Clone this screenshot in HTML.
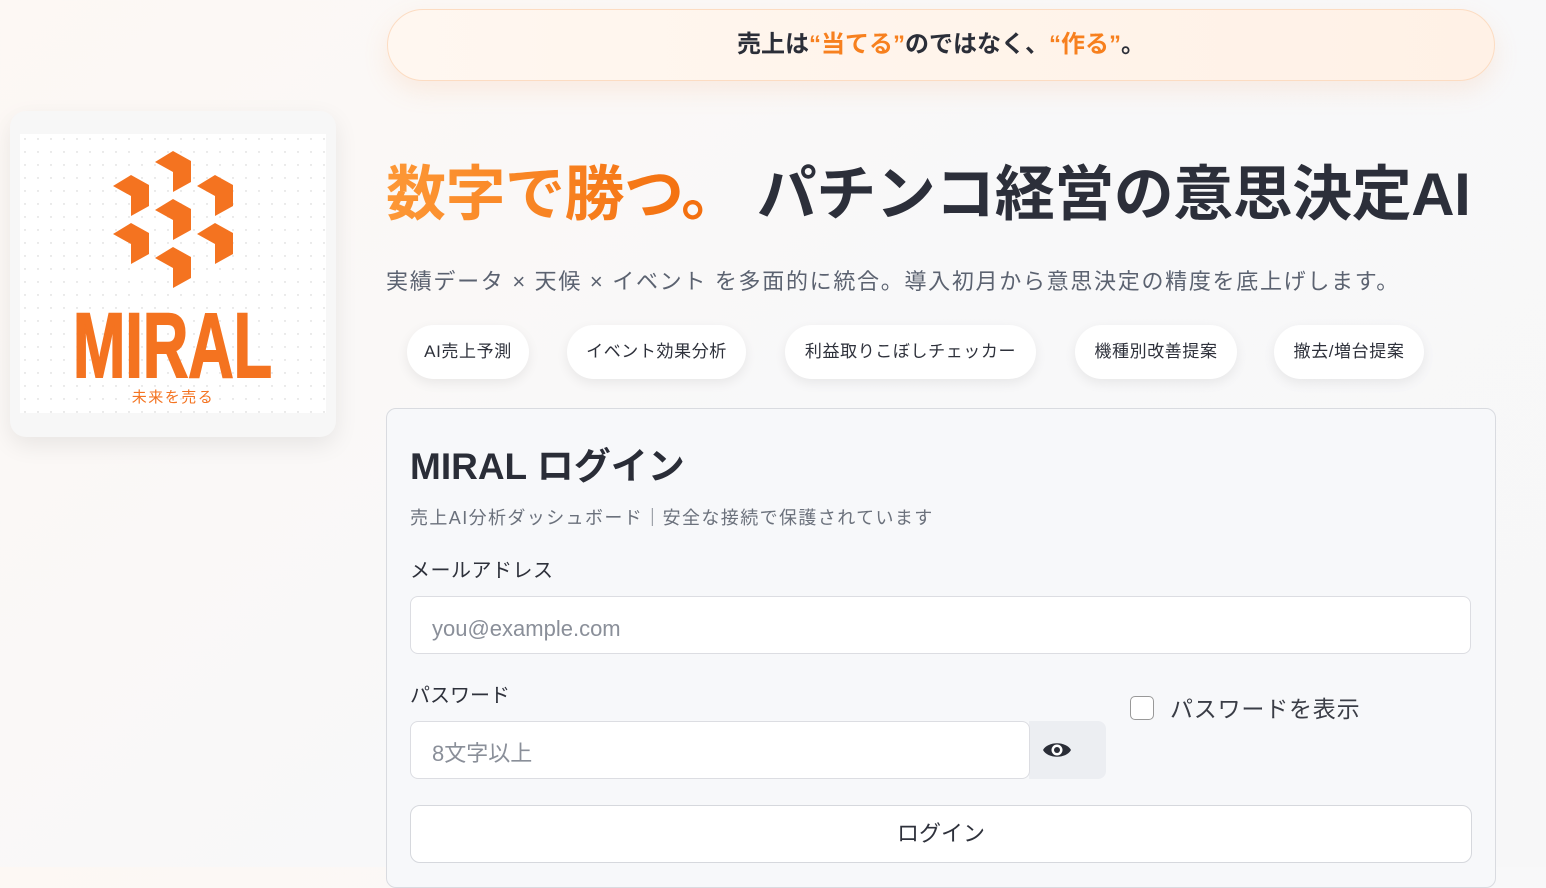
<!DOCTYPE html>
<html><head><meta charset="utf-8"><style>
*{margin:0;padding:0;box-sizing:border-box}
body{width:1546px;height:867px;overflow:hidden;position:relative;font-family:"Liberation Sans","Noto Sans CJK JP",sans-serif;background:linear-gradient(135deg,#fdf8f4 0%,#f8f8f9 50%,#f7f7f8 100%);color:#2e313b}
.a{position:absolute}
.banner{left:387px;top:9px;width:1108px;height:72px;border-radius:36px;background:linear-gradient(90deg,#fff7f0,#fff1e6);border:1.5px solid #fcdcc2;box-shadow:0 10px 25px rgba(250,160,100,.15);font-size:24px;font-weight:700;text-align:center;line-height:69px;color:#2b2e38}
.or{color:#f7801f}
.logo{left:10px;top:111px;width:326px;height:326px;border-radius:16px;background:#f7f7f7;box-shadow:0 8px 24px rgba(0,0,0,.08)}
.h1{left:386px;top:146px;font-size:60px;font-weight:700;white-space:nowrap;color:#2c2f3a;letter-spacing:-0.5px}
.h1 .g{background:linear-gradient(90deg,#fd9836,#f26a0a);-webkit-background-clip:text;color:transparent}
.sub{left:386px;top:264px;font-size:22px;color:#5b6270;white-space:nowrap;letter-spacing:1.7px}
.pill{top:325px;height:54px;border-radius:27px;background:#fff;box-shadow:0 4px 12px rgba(0,0,0,.07);font-size:17px;line-height:54px;text-align:center;color:#2e313b;letter-spacing:.6px}
.card{left:386px;top:408px;width:1110px;height:480px;border:1px solid #d9dbe0;border-radius:10px;background:#f7f8fa}
.in{background:#fff;border:1px solid #dcdde2;border-radius:8px;color:#8a8f99;font-size:22px;padding-left:21px}
</style></head><body>
<div class="a banner">売上は<span class="or">“当てる”</span>のではなく、<span class="or">“作る”</span>。</div>
<div class="a logo">
<svg width="326" height="326" style="position:absolute;left:0;top:0">
<defs><pattern id="d" width="13" height="13" patternUnits="userSpaceOnUse"><circle cx="2" cy="2" r=".7" fill="#ccc"/></pattern>
<path id="c" d="M0 11 L18 0 L36 10 L36 31 L18 41 L18 21 Z" fill="#f47320"/></defs>
<rect x="10" y="23" width="306" height="279" fill="#fff"/>
<rect x="10" y="23" width="306" height="279" fill="url(#d)"/>
<g transform="translate(-10,-111)">
<use href="#c" x="155" y="151"/><use href="#c" x="113" y="175"/><use href="#c" x="197" y="175"/>
<use href="#c" x="155" y="199"/><use href="#c" x="113" y="223"/><use href="#c" x="197" y="223"/>
<use href="#c" x="155" y="247"/>
<text x="73" y="377" font-family="Liberation Sans" font-weight="700" font-size="92" fill="#f47320" textLength="199" lengthAdjust="spacingAndGlyphs" stroke="#f47320" stroke-width="2">MIRAL</text>
<text x="173" y="402" font-size="15" fill="#f47320" text-anchor="middle" letter-spacing="1.5" font-family="Noto Sans CJK JP,sans-serif">未来を売る</text>
</g></svg></div>
<div class="a h1"><span class="g">数字で勝つ。</span> パチンコ経営の意思決定AI</div>
<div class="a sub">実績データ × 天候 × イベント を多面的に統合。導入初月から意思決定の精度を底上げします。</div>
<div class="a pill" style="left:407px;width:122px">AI売上予測</div>
<div class="a pill" style="left:567px;width:179px">イベント効果分析</div>
<div class="a pill" style="left:785px;width:251px">利益取りこぼしチェッカー</div>
<div class="a pill" style="left:1075px;width:162px">機種別改善提案</div>
<div class="a pill" style="left:1274px;width:150px">撤去/増台提案</div>
<div class="a card"></div>
<div class="a" style="left:410px;top:436px;font-size:37px;font-weight:700;color:#2a2d37">MIRAL ログイン</div>
<div class="a" style="left:410px;top:504px;font-size:18px;color:#6b717c;letter-spacing:1.4px">売上AI分析ダッシュボード｜安全な接続で保護されています</div>
<div class="a" style="left:410px;top:554px;font-size:20px;color:#2e313b;letter-spacing:.5px">メールアドレス</div>
<div class="a in" style="left:410px;top:596px;width:1061px;height:58px;line-height:64px">you@example.com</div>
<div class="a" style="left:410px;top:679px;font-size:20px;color:#2e313b">パスワード</div>
<div class="a" style="left:1029px;top:721px;width:77px;height:58px;background:#eceef2;border-radius:0 8px 8px 0"></div>
<div class="a in" style="left:410px;top:721px;width:620px;height:58px;line-height:64px">8文字以上</div>
<svg class="a" style="left:1042px;top:739px" width="30" height="22" viewBox="0 0 30 22"><path d="M1 11 C6 2 24 2 29 11 C24 20 6 20 1 11Z" fill="#2a2d37"/><circle cx="15" cy="11" r="5.5" fill="#fff"/><circle cx="15" cy="11" r="3" fill="#2a2d37"/></svg>
<div class="a" style="left:1130px;top:696px;width:24px;height:24px;border:1.5px solid #999;border-radius:5px;background:#fff"></div>
<div class="a" style="left:1170px;top:690px;font-size:23px;color:#3a3d46;letter-spacing:.8px">パスワードを表示</div>
<div class="a" style="left:410px;top:805px;width:1062px;height:58px;background:#fff;border:1px solid #d6d8dd;border-radius:10px;text-align:center;line-height:56px;font-size:22px;color:#2e313b">ログイン</div>
</body></html>
